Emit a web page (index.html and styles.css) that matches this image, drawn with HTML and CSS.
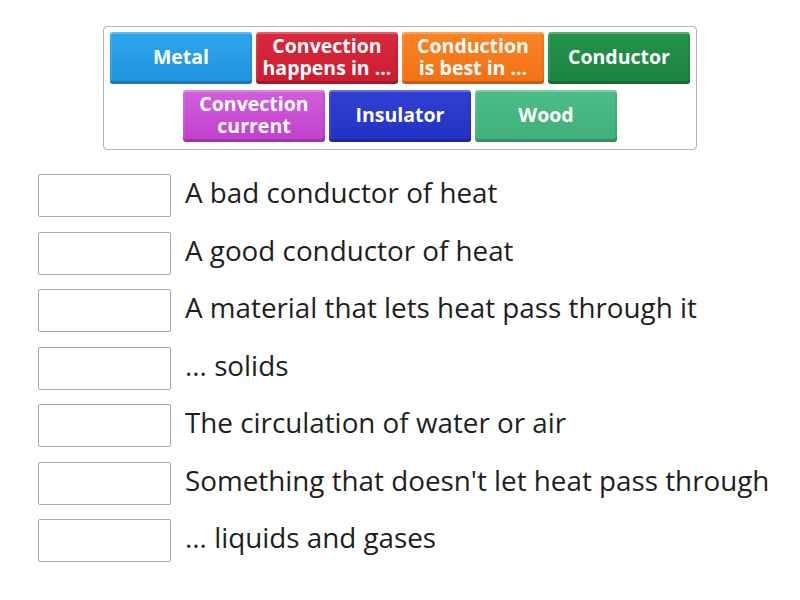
FILE: index.html
```html
<!DOCTYPE html>
<html>
<head>
<meta charset="utf-8">
<link rel="stylesheet" href="styles.css">
</head>
<body>
<div class="page">
  <div class="bank">
    <div class="row">
      <div class="tile blue">Metal</div>
      <div class="tile red">Convection happens in ...</div>
      <div class="tile orange">Conduction is best in ...</div>
      <div class="tile green">Conductor</div>
    </div>
    <div class="row">
      <div class="tile magenta">Convection current</div>
      <div class="tile navy">Insulator</div>
      <div class="tile mint">Wood</div>
    </div>
  </div>
  <div class="items">
    <div class="item"><div class="slot"></div><div class="text">A bad conductor of heat</div></div>
    <div class="item"><div class="slot"></div><div class="text">A good conductor of heat</div></div>
    <div class="item"><div class="slot"></div><div class="text">A material that lets heat pass through it</div></div>
    <div class="item"><div class="slot"></div><div class="text">... solids</div></div>
    <div class="item"><div class="slot"></div><div class="text">The circulation of water or air</div></div>
    <div class="item"><div class="slot"></div><div class="text">Something that doesn't let heat pass through</div></div>
    <div class="item"><div class="slot"></div><div class="text">... liquids and gases</div></div>
  </div>
</div>
</body>
</html>
```

FILE: styles.css
```css
html, body {
  margin: 0;
  padding: 0;
  background: #fff;
}
body {
  font-family: "Open Sans", "Liberation Sans", sans-serif;
  color: #1a1a1a;
}
.page {
  width: 800px;
  height: 600px;
  padding-top: 26px;
  box-sizing: border-box;
}
.bank {
  width: 594px;
  margin-left: 103px;
  box-sizing: border-box;
  border: 1px solid #b5b5b5;
  border-radius: 4px;
  padding: 5px 0 7px;
  display: flex;
  flex-direction: column;
  gap: 6px;
}
.row {
  display: flex;
  justify-content: center;
  gap: 4px;
}
.tile {
  width: 142px;
  height: 52px;
  box-sizing: border-box;
  border-radius: 3px;
  display: flex;
  align-items: center;
  justify-content: center;
  text-align: center;
  color: #fff;
  font-weight: 700;
  font-size: 19.5px;
  line-height: 22px;
  padding: 0 6px 2px;
  box-shadow: inset 0 2px 0 rgba(255,255,255,0.25), inset 0 -3px 0 rgba(0,0,0,0.18), inset 2px 0 0 rgba(255,255,255,0.08), inset -2px 0 0 rgba(0,0,0,0.06);
}
.blue { background: linear-gradient(#2ea6ec, #1f93df); }
.red { background: linear-gradient(#d92a3d, #cc1d30); }
.orange { background: linear-gradient(#fa8424, #f27015); }
.green { background: linear-gradient(#23944c, #1c8240); }
.magenta { background: linear-gradient(#d060dc, #c13fcd); }
.navy { background: linear-gradient(#3140d4, #2330c2); }
.mint { background: linear-gradient(#4dbd88, #3fb07a); }
.items {
  margin-top: 24px;
  margin-left: 38px;
  display: flex;
  flex-direction: column;
  gap: 14.5px;
}
.item {
  display: flex;
  align-items: center;
  gap: 14px;
  height: 43px;
}
.slot {
  width: 133px;
  height: 43px;
  box-sizing: border-box;
  border: 1px solid #a8a8a8;
  border-radius: 2px;
  background: #fff;
  flex: none;
}
.text {
  font-size: 27.8px;
  line-height: 36px;
  padding-bottom: 7px;
  white-space: nowrap;
  color: #1e1e1e;
}
```
